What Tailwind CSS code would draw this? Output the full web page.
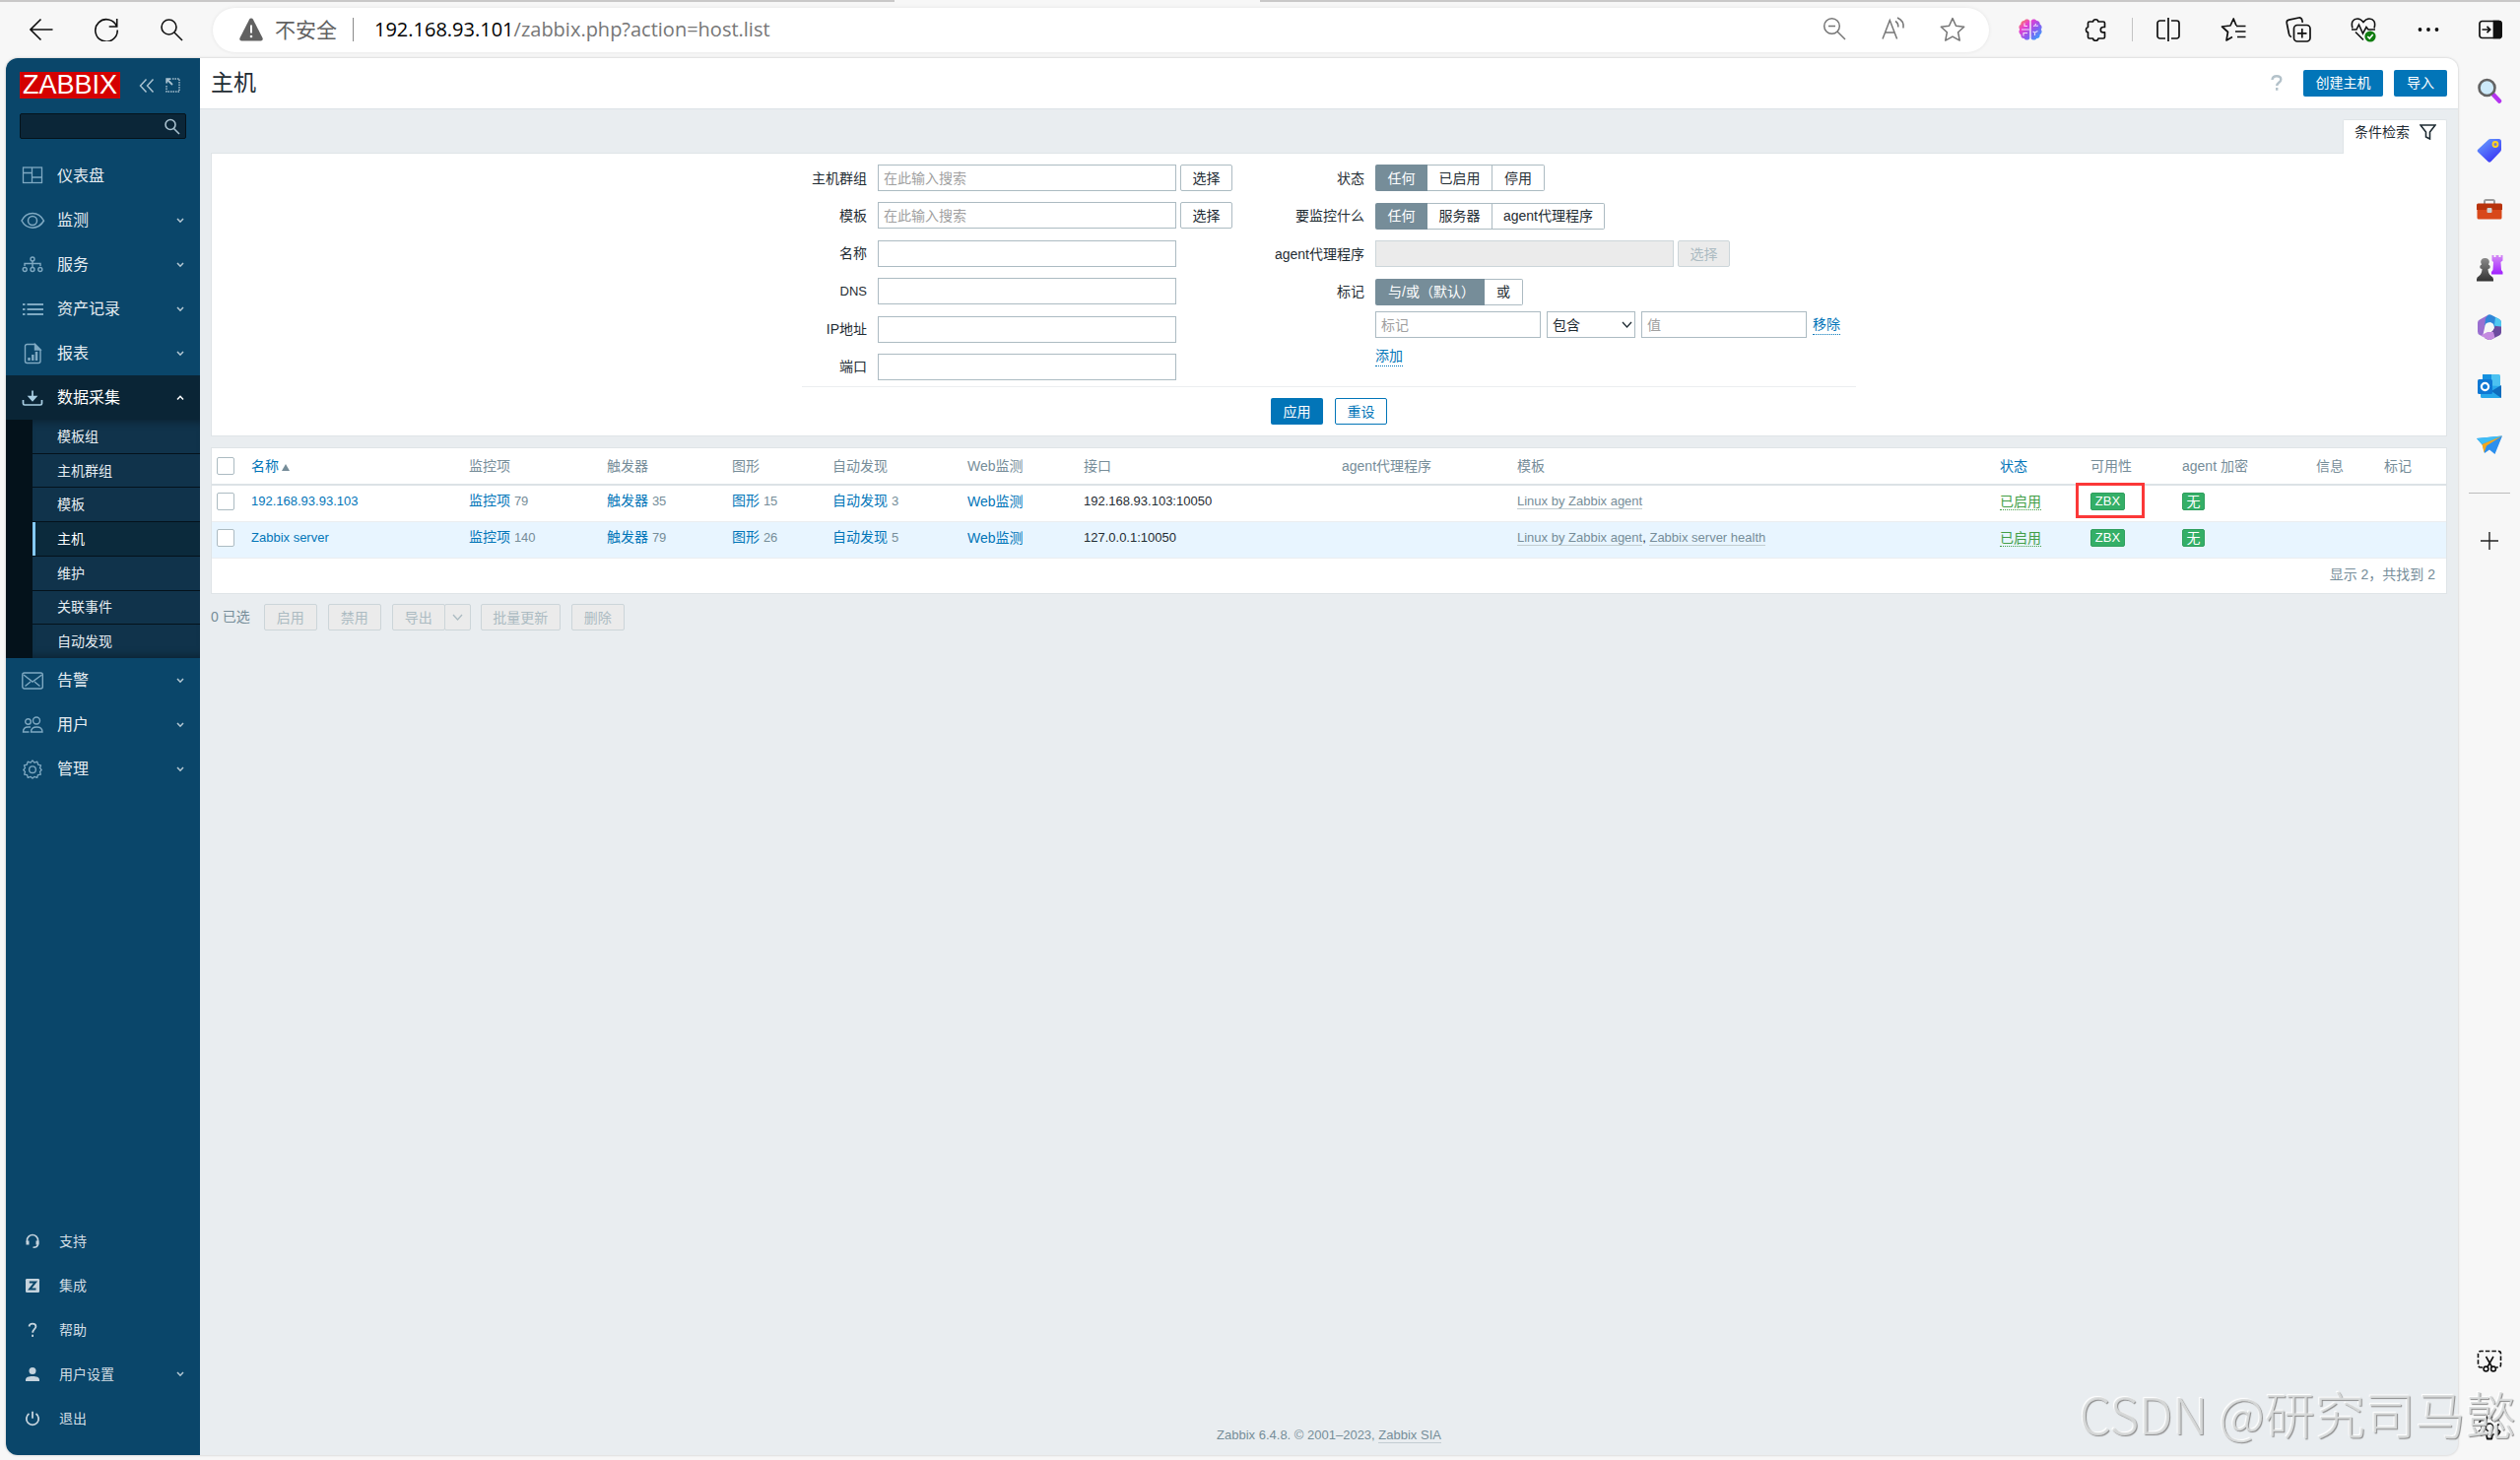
<!DOCTYPE html>
<html lang="zh-CN">
<head>
<meta charset="utf-8">
<title>主机</title>
<script src="https://cdn.jsdelivr.net/npm/@tailwindcss/browser@4"></script>
</head>
<body class="flex min-h-screen flex-col overflow-x-hidden bg-[#f7f7f7] font-['Liberation_Sans','Noto_Sans_CJK_SC',sans-serif] text-sm leading-5 text-[#1f2c33]">
<svg class="hidden">
  <symbol id="down" viewBox="0 0 8 6"><path d="M1 1l3 3.200 3-3.200" fill="none" stroke="currentColor" stroke-width="1.500"/></symbol>
  <symbol id="up" viewBox="0 0 8 6"><path d="M1 4.500l3-3.200 3 3.200" fill="none" stroke="currentColor" stroke-width="1.500"/></symbol>
</svg>

<!-- browser toolbar -->
<div class="flex h-[2px] bg-[#c9c8c8]"><div class="ml-[35.5%] w-[14.5%] bg-[#f7f7f7]"></div></div>
<header class="flex h-[57px] items-center pb-px font-['Open_Sans','Noto_Sans_CJK_SC',sans-serif]">
  <div class="ml-[9px] flex">
    <button aria-label="后退" class="flex w-[66px] justify-center"><svg class="size-6" viewBox="0 0 24 24" fill="none" stroke="#111" stroke-width="1.600"><path d="M23.500 12H1.500M11.500 1.500L1 12l10.500 10.500"/></svg></button>
    <button aria-label="刷新" class="flex w-[66px] justify-center"><svg class="size-6" viewBox="0 0 24 24" fill="none" stroke="#111" stroke-width="1.600"><path d="M22.500 9A11.200 11.200 0 1 0 23.200 12.500M22.700 1v8h-8"/></svg></button>
    <button aria-label="搜索" class="flex w-[66px] justify-center"><svg class="size-6" viewBox="0 0 24 24" fill="none" stroke="#111" stroke-width="1.600"><circle cx="9.500" cy="9.500" r="7.500"/><path d="M15 15l8 8"/></svg></button>
  </div>
  <div class="mx-[9px] flex h-[45px] flex-1 items-center rounded-full bg-white pr-[7px] pl-[27px] shadow-[0_0_4px_rgba(0,0,0,0.08)]">
    <svg class="size-6" viewBox="0 0 24 24"><path d="M12 .5c.8 0 1.400.4 1.800 1.100l9.700 18.800c.7 1.400-.2 3-1.800 3H2.300c-1.600 0-2.500-1.600-1.800-3L10.200 1.600C10.600.9 11.200.5 12 .5z" fill="#616161"/><path d="M12 7.500v8" stroke="#fff" stroke-width="2"/><circle cx="12" cy="19" r="1.300" fill="#fff"/></svg>
    <span class="ml-3 text-[21px] leading-6 text-[#616161]">不安全</span>
    <span class="ml-4 h-6 w-px bg-[#8a8a8a]"></span>
    <span class="ml-[21px] text-[20px] leading-6 text-[#767676]"><span class="text-black">192.168.93.101</span>/zabbix.php?action=host.list</span>
    <div class="ml-auto flex">
      <button aria-label="缩小" class="flex w-[60px] justify-center"><svg class="size-6" viewBox="0 0 24 24" fill="none" stroke="#767676" stroke-width="1.500"><circle cx="9.500" cy="9.500" r="7.800"/><path d="M15 15l8 8M6 9.500h7"/></svg></button>
      <button aria-label="朗读" class="flex w-[60px] justify-center"><svg class="size-6" viewBox="0 0 24 24" fill="none" stroke="#767676" stroke-width="1.500"><path d="M1 22.500L8.300 3.500 15.600 22.500M3.600 16h9.400M14 4.500c2 1.300 3 3.500 2.800 6M16 1c4.500 2 6.700 6 6 10.500"/></svg></button>
      <button aria-label="收藏" class="flex w-[60px] justify-center"><svg class="size-[26px]" viewBox="0 0 24 24" fill="none" stroke="#767676" stroke-width="1.400" stroke-linejoin="round"><path d="M12 1.500l3.200 7 7.600.9-5.600 5.200 1.500 7.600L12 18.500l-6.700 3.700 1.500-7.600L1.200 9.400l7.600-.9z"/></svg></button>
    </div>
  </div>
  <button aria-label="大脑" class="flex w-[66px] justify-center"><svg class="size-6" viewBox="0 0 24 24"><defs><linearGradient id="br" x1="0" y1="0" x2="1" y2="1"><stop offset="0" stop-color="#ff9a3c"/><stop offset=".3" stop-color="#e83fd0"/><stop offset=".6" stop-color="#8a5cf0"/><stop offset="1" stop-color="#1fb6ff"/></linearGradient></defs><path d="M11.300 3v18c-1 2-4.500 2.300-5.500 0-2.300.2-3.800-1.600-3.300-3.600C.3 16-.2 13.500 1.200 12-.2 10 .3 7.500 2.300 6.700 2.100 4.500 3.700 3 5.600 3.100 6.700.8 10.300.9 11.300 3zM12.700 3v18c1 2 4.500 2.300 5.500 0 2.300.2 3.800-1.600 3.300-3.600 2.200-1.400 2.700-3.900 1.300-5.400 1.400-2 .9-4.500-1.100-5.300.2-2.200-1.400-3.700-3.300-3.600C17.300.8 13.700.9 12.700 3z" fill="url(#br)"/><path d="M3 12h8M6 5.500v3h3M5 18.500v-3h4M15 8.500c2 0 2.500-1 2.500-2.500M20 8l-2.500.5M16.500 18v-3l-2-1M16.500 15l3-1.500" fill="none" stroke="#fff" stroke-width="1.100" opacity=".8"/></svg></button>
  <button aria-label="扩展" class="flex w-[66px] justify-center"><svg class="size-6" viewBox="0 0 24 24" fill="none" stroke="#111" stroke-width="1.700" stroke-linejoin="round"><path d="M9.500 4a2.800 2.800 0 0 1 5.500 0h5a1.500 1.500 0 0 1 1.500 1.500V9.500h-1.500a2.700 2.700 0 0 0 0 5.400h1.500v4.600A1.500 1.500 0 0 1 20 21h-5a2.800 2.800 0 0 1-5.500 0H6a1.500 1.500 0 0 1-1.500-1.500v-4.600a2.800 2.800 0 0 1 0-5.400V5.500A1.500 1.500 0 0 1 6 4z"/></svg></button>
  <div class="flex w-2 justify-center"><span class="h-6 w-px bg-[#c4c4c4]"></span></div>
  <button aria-label="分屏" class="flex w-[66px] justify-center"><svg class="size-6" viewBox="0 0 24 24" fill="none" stroke="#111" stroke-width="1.700"><path d="M9 3H3.500A2.500 2.500 0 0 0 1 5.500v13A2.500 2.500 0 0 0 3.500 21H9M15 3h5.500A2.500 2.500 0 0 1 23 5.500v13a2.500 2.500 0 0 1-2.500 2.500H15M12 0v24"/></svg></button>
  <button aria-label="收藏夹" class="flex w-[66px] justify-center"><svg class="size-[26px]" viewBox="0 0 26 26" fill="none" stroke="#111" stroke-width="1.700" stroke-linejoin="round"><path d="M16 9l-2.800-7L10 9l-8.500 1 6 5.500-1.500 8.500 6-3.500M16 9.500h9.500M15 15h10.500M17 20.500h8.500"/></svg></button>
  <button aria-label="集锦" class="flex w-[66px] justify-center"><svg class="size-[26px]" viewBox="0 0 26 26" fill="none" stroke="#111" stroke-width="1.700"><rect x="8.500" y="8.500" width="16.500" height="16.500" rx="3.500"/><path d="M16.800 12v9.500M12 16.800h9.500M6 20.500c-1.500-.5-2.300-1.500-2.500-3L1.300 6.500C1 4.800 2 3.500 3.500 3.200l10-2.200c1.600-.3 3 .7 3.300 2.300l.5 2.500"/></svg></button>
  <button aria-label="性能" class="flex w-[66px] justify-center"><svg class="size-[26px]" viewBox="0 0 26 26" fill="none" stroke="#111" stroke-width="1.600"><path d="M2 11.500C0 5 3 2 7 2c3 0 4.500 1.500 6 3.500C14.500 3.500 16 2 19 2c4 0 7 3 5 9.500M1 13h5l2.500-5 4 9 3.500-6.500 2 2.500h7M5 15.500l8 8"/><circle cx="20" cy="20" r="5.600" fill="#107c10" stroke="none"/><path d="M17.300 20l2 2 3.400-4" stroke="#fff"/></svg></button>
  <button aria-label="更多" class="flex w-[66px] justify-center"><svg class="size-6" viewBox="0 0 24 24" fill="#111"><circle cx="3.500" cy="12" r="1.900"/><circle cx="12" cy="12" r="1.900"/><circle cx="20.500" cy="12" r="1.900"/></svg></button>
  <button aria-label="侧栏" class="flex w-[60px] justify-center"><svg class="size-6" viewBox="0 0 24 24" fill="none" stroke="#111" stroke-width="1.700"><rect x="1" y="3.500" width="22" height="17" rx="2.500"/><path d="M15.500 3.500H20.500A2.500 2.500 0 0 1 23 6v12a2.500 2.500 0 0 1-2.500 2.500h-5z" fill="#111"/><path d="M3.500 12h8M8.500 8.800l3.200 3.200-3.200 3.200"/></svg></button>
</header>

<div class="flex flex-1 pb-[5px] pl-[6px]">
  <div class="flex flex-1 overflow-hidden rounded-xl bg-[#e9edf0] shadow-[0_0_2px_1px_rgba(0,0,0,0.1)]">
    <!-- sidebar -->
    <nav class="flex w-[197px] shrink-0 flex-col bg-[#0a466a] pt-[14px] pb-[15px] text-[#e6edf2]">
      <div class="flex items-center px-[14px]">
        <a href="#" class="flex h-[27px] w-[102px] items-center justify-center bg-[#d40000] text-[27px] leading-[27px] text-white">ZABBIX</a>
        <button aria-label="收起侧栏" class="ml-[19px]"><svg class="h-[14px] w-4" viewBox="0 0 16 14" fill="none" stroke="#a9c1cf" stroke-width="1.500"><path d="M7.500.5L1.500 7l6 6.500M14.500.5l-6 6.500 6 6.500"/></svg></button>
        <button aria-label="隐藏侧栏" class="ml-[11px]"><svg class="h-[15px] w-[15px]" viewBox="0 0 15 15" fill="none" stroke="#a9c1cf" stroke-width="1.400"><path d="M7 1h7v13H1V7" stroke-dasharray="1.500 1"/><path d="M1.500 1.500L7 7M1.200 5.500V1.200H5.500" stroke-width="1.800"/></svg></button>
      </div>
      <form class="mx-[14px] mt-[15px] flex h-[26px] w-[169px] items-center rounded-[2px] border border-[#04121b] bg-[#0b2638] pr-[5px]">
        <input aria-label="搜索" class="min-w-0 flex-1 bg-transparent px-2 outline-none">
        <button aria-label="搜索"><svg class="size-[17px]" viewBox="0 0 17 17" fill="none" stroke="#a9c1cf" stroke-width="1.600"><circle cx="7" cy="6.500" r="5"/><path d="M10.500 10.500l5.500 5.500"/></svg></button>
      </form>
      <ul class="mt-[15px] text-base">
        <li><a href="#" class="flex h-[45px] items-center pl-4"><svg class="size-[22px]" viewBox="0 0 22 22" fill="none" stroke="#7fa9c2" stroke-width="1.300"><rect x="1.500" y="2" width="19" height="15.500"/><path d="M10.500 2v15.500M1.500 7.500h9M10.500 12h10"/></svg><span class="ml-[14px]">仪表盘</span></a></li>
        <li><a href="#" class="flex h-[45px] items-center pl-4"><svg class="size-[22px] overflow-visible" viewBox="0 0 22 22" fill="none" stroke="#7fa9c2" stroke-width="1.500"><path d="M0 11C5 1 17 1 22.500 11 17 20.500 5 20.500 0 11z"/><circle cx="11" cy="11" r="4.500"/></svg><span class="ml-[14px]">监测</span><svg class="mr-4 ml-auto h-[6px] w-2 text-[#b5c8d3]"><use href="#down"/></svg></a></li>
        <li><a href="#" class="flex h-[45px] items-center pl-4"><svg class="size-[22px]" viewBox="0 0 22 22" fill="none" stroke="#7fa9c2" stroke-width="1.400"><circle cx="11" cy="5" r="2"/><circle cx="3.200" cy="15.500" r="2"/><circle cx="11" cy="15.500" r="2"/><circle cx="18.800" cy="15.500" r="2"/><path d="M11 7v6M3 12V9.500h16V12"/></svg><span class="ml-[14px]">服务</span><svg class="mr-4 ml-auto h-[6px] w-2 text-[#b5c8d3]"><use href="#down"/></svg></a></li>
        <li><a href="#" class="flex h-[45px] items-center pl-4"><svg class="size-[22px]" viewBox="0 0 22 22" fill="none" stroke="#7fa9c2" stroke-width="2"><path d="M1 6h2.500M5.500 6H22M1 11h2.500M5.500 11H22M1 16h2.500M5.500 16H22"/></svg><span class="ml-[14px]">资产记录</span><svg class="mr-4 ml-auto h-[6px] w-2 text-[#b5c8d3]"><use href="#down"/></svg></a></li>
        <li><a href="#" class="flex h-[45px] items-center pl-4"><svg class="size-[22px]" viewBox="0 0 22 22" fill="none" stroke="#7fa9c2" stroke-width="1.400"><path d="M13.500 1.500H5.500a2 2 0 0 0-2 2v15a2 2 0 0 0 2 2h11.500a2 2 0 0 0 2-2V7z"/><path d="M13.500 1.500V7H19z" fill="#7fa9c2"/><path d="M7.500 18v-3M11.300 18v-6M15 18V9" stroke-width="2.500"/></svg><span class="ml-[14px]">报表</span><svg class="mr-4 ml-auto h-[6px] w-2 text-[#b5c8d3]"><use href="#down"/></svg></a></li>
        <li>
          <a href="#" class="flex h-[45px] items-center bg-[#0a2536] pl-4 text-white"><svg class="size-[22px]" viewBox="0 0 22 22" fill="none" stroke="#a9cfe4" stroke-width="1.700"><path d="M1.500 13v3.500a1.500 1.500 0 0 0 1.500 1.500h16a1.500 1.500 0 0 0 1.500-1.500V13M11 3.500v9"/><path d="M7.500 9.500h7L11 13.500z" fill="#a9cfe4"/></svg><span class="ml-[14px]">数据采集</span><svg class="mr-4 ml-auto h-[6px] w-2"><use href="#up"/></svg></a>
          <ul class="flex h-[242px] flex-col divide-y divide-[#04121b] border-l-[27px] border-[#04121b] bg-[#10334b] text-sm text-[#e6edf2]">
            <li class="flex flex-1 items-center pl-[25px] shadow-[inset_0_8px_8px_-6px_rgba(0,0,0,0.35)]"><a href="#">模板组</a></li>
            <li class="flex flex-1 items-center pl-[25px]"><a href="#">主机群组</a></li>
            <li class="flex flex-1 items-center pl-[25px]"><a href="#">模板</a></li>
            <li class="flex flex-1 items-center bg-[#0b2a3c] text-white"><span class="h-full w-[3px] bg-[#85c9f7]"></span><a href="#" class="pl-[22px]">主机</a></li>
            <li class="flex flex-1 items-center pl-[25px]"><a href="#">维护</a></li>
            <li class="flex flex-1 items-center pl-[25px]"><a href="#">关联事件</a></li>
            <li class="flex flex-1 items-center pl-[25px] shadow-[inset_0_-8px_8px_-6px_rgba(0,0,0,0.35)]"><a href="#">自动发现</a></li>
          </ul>
        </li>
        <li><a href="#" class="flex h-[45px] items-center pl-4"><svg class="size-[22px]" viewBox="0 0 22 22" fill="none" stroke="#7fa9c2" stroke-width="1.400"><rect x=".8" y="3" width="20.500" height="16" rx="2"/><path d="M2 5l9 7 9.500-7M3.500 16.500l5.500-4.500M18.500 16.500L13 12"/></svg><span class="ml-[14px]">告警</span><svg class="mr-4 ml-auto h-[6px] w-2 text-[#b5c8d3]"><use href="#down"/></svg></a></li>
        <li><a href="#" class="flex h-[45px] items-center pl-4"><svg class="size-[22px]" viewBox="0 0 22 22" fill="none" stroke="#7fa9c2" stroke-width="1.400"><circle cx="6.500" cy="7.500" r="2.800"/><circle cx="15" cy="6.500" r="3.500"/><path d="M9.500 18c0-3.500 2-5 5.800-5s5.700 1.500 5.700 5zM7.500 18H1.500c0-3.500 1.500-5 5-5h2.500"/></svg><span class="ml-[14px]">用户</span><svg class="mr-4 ml-auto h-[6px] w-2 text-[#b5c8d3]"><use href="#down"/></svg></a></li>
        <li><a href="#" class="flex h-[45px] items-center pl-4"><svg class="size-[22px]" viewBox="0 0 22 23" fill="none" stroke="#7fa9c2" stroke-width="1.400" stroke-linejoin="round"><path d="M11 2l2 2.300 3-1 .9 3 3 .8-1 3 1.700 1.900-1.700 2 .8 2.800-3 .6-.8 2.900-3-1L11 21l-1.900-1.700-3 1-.8-2.900-3-.6.800-2.800-1.700-2 1.700-1.900-1-3 3-.8.900-3 3 1z"/><circle cx="11" cy="11.700" r="3.500"/></svg><span class="ml-[14px]">管理</span><svg class="mr-4 ml-auto h-[6px] w-2 text-[#b5c8d3]"><use href="#down"/></svg></a></li>
      </ul>
      <ul class="mt-auto text-[#d3dee5]">
        <li><a href="#" class="flex h-[45px] items-center pl-[19px]"><svg class="size-4" viewBox="0 0 16 16" fill="none" stroke="#c5d3dd" stroke-width="1.600"><path d="M2.500 9V7a5.500 5.500 0 0 1 11 0v3.500c0 2-1.500 3.700-5 3.700"/><path d="M3 7.500v4M13 7.500v4" stroke-width="3"/></svg><span class="ml-[19px]">支持</span></a></li>
        <li><a href="#" class="flex h-[45px] items-center pl-[19px]"><svg class="size-4" viewBox="0 0 16 16"><rect x="1" y="1" width="14" height="14" rx="1.200" fill="#c5d3dd"/><path d="M4.800 4.500h6.200L5.200 11.500h6.300" fill="none" stroke="#0a466a" stroke-width="2"/></svg><span class="ml-[19px]">集成</span></a></li>
        <li><a href="#" class="flex h-[45px] items-center pl-[19px]"><svg class="size-4" viewBox="0 0 16 16" fill="none" stroke="#c5d3dd" stroke-width="1.800"><path d="M4.500 4.500C4.800 2.500 6 1.700 8 1.700s3.400 1 3.400 2.800c0 2.500-3.200 3-3.200 6.200"/><path d="M8.100 12.800V15"/></svg><span class="ml-[19px]">帮助</span></a></li>
        <li><a href="#" class="flex h-[45px] items-center pl-[19px]"><svg class="size-4" viewBox="0 0 16 16" fill="#c5d3dd"><circle cx="8" cy="4.500" r="3.500"/><path d="M1 15v-1.500C1 11 4 10 8 10s7 1 7 3.500V15z"/></svg><span class="ml-[19px]">用户设置</span><svg class="mr-4 ml-auto h-[6px] w-2 text-[#b5c8d3]"><use href="#down"/></svg></a></li>
        <li><a href="#" class="flex h-[45px] items-center pl-[19px]"><svg class="size-4" viewBox="0 0 16 16" fill="none" stroke="#c5d3dd" stroke-width="1.800"><path d="M4.500 3a6.200 6.200 0 1 0 7 0M8 .8v7"/></svg><span class="ml-[19px]">退出</span></a></li>
      </ul>
    </nav>

    <!-- page -->
    <main class="flex min-w-0 flex-1 flex-col">
      <div class="flex h-[52px] items-center border-b border-[#dce2e6] bg-white px-[11px] pb-px">
        <h1 class="text-[23px] leading-8">主机</h1>
        <button aria-label="帮助" class="mr-5 ml-auto"><svg class="h-4 w-[14px]" viewBox="0 0 14 16" fill="none" stroke="#b4c2ca" stroke-width="2.400"><path d="M2.500 5C2.700 2.500 4.500 1.300 7 1.300s4.300 1.200 4.300 3.400c0 3-4.100 3-4.100 6.300"/><path d="M7.200 13v2.800"/></svg></button>
        <button class="h-[27px] w-[81px] rounded-[2px] bg-[#0275b8] text-white">创建主机</button>
        <button class="ml-[11px] h-[27px] w-[54px] rounded-[2px] bg-[#0275b8] text-white">导入</button>
      </div>

      <div class="px-[11px] pt-[10px]">
        <div class="flex justify-end">
          <a href="#" class="relative z-10 -mb-px flex h-[35px] w-[106px] items-start gap-[10px] rounded-t-[2px] border border-b-0 border-[#dfe4e7] bg-white pt-[2px] pl-[11px]">条件检索<svg class="mt-[2px] h-4 w-[17px]" viewBox="0 0 17 16" fill="none" stroke="#1f2c33" stroke-width="1.600"><path d="M1 1h15l-5.500 7v7l-4-2V8z"/></svg></a>
        </div>
        <form class="border border-[#dfe4e7] bg-white pt-[11px] pb-[11px]">
          <div class="mx-auto w-[1070px]">
            <div class="flex border-b border-[#ebeef0] pb-[6px]">
              <div class="flex h-[219px] w-[505px] flex-col justify-between">
                <div class="flex h-[27px] items-center"><label for="f1" class="mr-[11px] w-[66px] text-right">主机群组</label><input id="f1" placeholder="在此输入搜索" class="h-[27px] w-[303px] border border-[#acbbc2] px-[5px] placeholder:text-[#a0a0a0]"><button type="button" class="ml-1 h-[27px] w-[53px] rounded-[2px] border border-[#acbbc2]">选择</button></div>
                <div class="flex h-[27px] items-center"><label for="f2" class="mr-[11px] w-[66px] text-right">模板</label><input id="f2" placeholder="在此输入搜索" class="h-[27px] w-[303px] border border-[#acbbc2] px-[5px] placeholder:text-[#a0a0a0]"><button type="button" class="ml-1 h-[27px] w-[53px] rounded-[2px] border border-[#acbbc2]">选择</button></div>
                <div class="flex h-[27px] items-center"><label for="f3" class="mr-[11px] w-[66px] text-right">名称</label><input id="f3" class="h-[27px] w-[303px] border border-[#acbbc2] px-[5px]"></div>
                <div class="flex h-[27px] items-center"><label for="f4" class="mr-[11px] w-[66px] text-right text-[13px]">DNS</label><input id="f4" class="h-[27px] w-[303px] border border-[#acbbc2] px-[5px]"></div>
                <div class="flex h-[27px] items-center"><label for="f5" class="mr-[11px] w-[66px] text-right">IP地址</label><input id="f5" class="h-[27px] w-[303px] border border-[#acbbc2] px-[5px]"></div>
                <div class="flex h-[27px] items-center"><label for="f6" class="mr-[11px] w-[66px] text-right">端口</label><input id="f6" class="h-[27px] w-[303px] border border-[#acbbc2] px-[5px]"></div>
              </div>
              <div class="flex-1">
                <div class="flex h-[143px] flex-col justify-between">
                  <div role="radiogroup" aria-labelledby="l-st" class="flex h-[27px] items-center"><span id="l-st" class="mr-[11px] w-[66px] text-right">状态</span>
                    <label class="flex h-[27px] w-[53px] items-center justify-center rounded-l-[2px] bg-[#768d99] text-white"><input type="radio" name="st" checked class="sr-only">任何</label><label class="flex h-[27px] w-[66px] items-center justify-center border-y border-r border-[#acbbc2]"><input type="radio" name="st" class="sr-only">已启用</label><label class="flex h-[27px] w-[53px] items-center justify-center rounded-r-[2px] border-y border-r border-[#acbbc2]"><input type="radio" name="st" class="sr-only">停用</label></div>
                  <div role="radiogroup" aria-labelledby="l-mo" class="flex h-[27px] items-center"><span id="l-mo" class="mr-[11px] -ml-9 w-[102px] text-right">要监控什么</span>
                    <label class="flex h-[27px] w-[53px] items-center justify-center rounded-l-[2px] bg-[#768d99] text-white"><input type="radio" name="mo" checked class="sr-only">任何</label><label class="flex h-[27px] w-[66px] items-center justify-center border-y border-r border-[#acbbc2]"><input type="radio" name="mo" class="sr-only">服务器</label><label class="flex h-[27px] w-[114px] items-center justify-center rounded-r-[2px] border-y border-r border-[#acbbc2]"><input type="radio" name="mo" class="sr-only">agent代理程序</label></div>
                  <div class="flex h-[27px] items-center"><label for="px" class="mr-[11px] -ml-9 w-[102px] text-right">agent代理程序</label><input id="px" disabled class="h-[27px] w-[303px] border border-[#ccd5d9] bg-[#ebebeb]"><button type="button" disabled class="ml-1 h-[27px] w-[53px] rounded-[2px] border border-[#ccd5d9] bg-[#ebebeb] text-[#acbbc2]">选择</button></div>
                  <div role="radiogroup" aria-labelledby="l-tg" class="flex h-[27px] items-center"><span id="l-tg" class="mr-[11px] w-[66px] text-right">标记</span>
                    <label class="flex h-[27px] w-[111px] items-center rounded-l-[2px] bg-[#768d99] pl-[13px] whitespace-nowrap text-white"><input type="radio" name="tg" checked class="sr-only">与/或（默认）</label><label class="flex h-[27px] w-[39px] items-center justify-center rounded-r-[2px] border-y border-r border-[#acbbc2]"><input type="radio" name="tg" class="sr-only">或</label></div>
                </div>
                <div class="mt-[6px] ml-[77px] flex items-center gap-[6px]">
                  <input aria-label="标记" placeholder="标记" class="h-[27px] w-[168px] border border-[#acbbc2] px-[5px] placeholder:text-[#a0a0a0]">
                  <div class="grid w-[90px] items-center"><select aria-label="运算符" class="col-start-1 row-start-1 h-[27px] appearance-none border border-[#acbbc2] bg-white px-[5px]"><option>包含</option></select><svg class="pointer-events-none col-start-1 row-start-1 mr-[3px] h-[7px] w-[11px] justify-self-end" viewBox="0 0 11 7" fill="none" stroke="#1f2c33" stroke-width="1.300"><path d="M1 1l4.500 5L10 1"/></svg></div>
                  <input aria-label="值" placeholder="值" class="h-[27px] w-[168px] border border-[#acbbc2] px-[5px] placeholder:text-[#a0a0a0]">
                  <a href="#" class="border-b border-dotted border-[#0275b8] text-[#0275b8]">移除</a>
                </div>
                <a href="#" class="mt-2 ml-[77px] inline-block border-b border-dotted border-[#0275b8] text-[#0275b8]">添加</a>
              </div>
            </div>
            <div class="flex justify-center gap-3 pt-[11px]">
              <button type="button" class="h-[27px] w-[53px] rounded-[2px] bg-[#0275b8] text-white">应用</button>
              <button type="button" class="h-[27px] w-[53px] rounded-[2px] border border-[#0275b8] text-[#0275b8]">重设</button>
            </div>
          </div>
        </form>

        <div class="mt-[11px] border border-[#dfe4e7] bg-white">
          <table class="w-full table-fixed text-left">
            <colgroup><col class="w-[35px]"><col class="w-[221px]"><col class="w-[140px]"><col class="w-[127px]"><col class="w-[102px]"><col class="w-[137px]"><col class="w-[118px]"><col class="w-[262px]"><col class="w-[178px]"><col><col class="w-[92px]"><col class="w-[93px]"><col class="w-[136px]"><col class="w-[69px]"><col class="w-[68px]"></colgroup>
            <thead>
              <tr class="h-[37px] border-b-2 border-[#dce2e6] text-[#768d99] *:px-[5px] *:font-normal">
                <th><input type="checkbox" aria-label="全选" class="block size-[18px] appearance-none rounded-[2px] border border-[#acbbc2] bg-white"></th>
                <th><a href="#" class="text-[#0275b8]">名称</a><svg class="ml-[3px] inline h-[7px] w-2" viewBox="0 0 8 7"><path d="M4 0l4 7H0z" fill="#768d99"/></svg></th>
                <th>监控项</th><th>触发器</th><th>图形</th><th>自动发现</th><th>Web监测</th><th>接口</th><th>agent代理程序</th><th>模板</th>
                <th><a href="#" class="text-[#0275b8]">状态</a></th><th>可用性</th><th>agent 加密</th><th>信息</th><th>标记</th>
              </tr>
            </thead>
            <tbody class="text-[#768d99]">
              <tr class="h-[37px] border-b border-[#ebeef0] *:px-[5px] *:pb-1">
                <td><input type="checkbox" aria-label="192.168.93.93.103" class="block size-[18px] appearance-none rounded-[2px] border border-[#acbbc2] bg-white"></td>
                <td class="text-[13px]"><a href="#" class="text-[#0275b8]">192.168.93.93.103</a></td>
                <td><a href="#" class="text-[#0275b8]">监控项</a> <span class="text-[13px]">79</span></td>
                <td><a href="#" class="text-[#0275b8]">触发器</a> <span class="text-[13px]">35</span></td>
                <td><a href="#" class="text-[#0275b8]">图形</a> <span class="text-[13px]">15</span></td>
                <td><a href="#" class="text-[#0275b8]">自动发现</a> <span class="text-[13px]">3</span></td>
                <td><a href="#" class="text-[#0275b8]">Web监测</a></td>
                <td class="text-[13px] text-[#1f2c33]">192.168.93.103:10050</td>
                <td></td>
                <td class="text-[13px]"><a href="#" class="border-b border-[#c3cdd2]">Linux by Zabbix agent</a></td>
                <td><a href="#" class="border-b border-dotted border-[#429e47] text-[#429e47]">已启用</a></td>
                <td class="relative"><span class="flex h-[18px] w-[35px] items-center justify-center rounded-[2px] border border-[#2f9f5e] bg-[#34af67] text-[13px] text-white">ZBX</span><span class="absolute -top-[3px] -left-[10px] h-9 w-[70px] border-3 border-[#fb3838]"></span></td>
                <td><span class="flex h-[18px] w-[23px] items-center justify-center rounded-[2px] border border-[#2f9f5e] bg-[#34af67] text-white">无</span></td>
                <td></td><td></td>
              </tr>
              <tr class="h-[37px] border-b border-[#ebeef0] bg-[#e8f5ff] *:px-[5px] *:pb-1">
                <td><input type="checkbox" aria-label="Zabbix server" class="block size-[18px] appearance-none rounded-[2px] border border-[#acbbc2] bg-white"></td>
                <td class="text-[13px]"><a href="#" class="text-[#0275b8]">Zabbix server</a></td>
                <td><a href="#" class="text-[#0275b8]">监控项</a> <span class="text-[13px]">140</span></td>
                <td><a href="#" class="text-[#0275b8]">触发器</a> <span class="text-[13px]">79</span></td>
                <td><a href="#" class="text-[#0275b8]">图形</a> <span class="text-[13px]">26</span></td>
                <td><a href="#" class="text-[#0275b8]">自动发现</a> <span class="text-[13px]">5</span></td>
                <td><a href="#" class="text-[#0275b8]">Web监测</a></td>
                <td class="text-[13px] text-[#1f2c33]">127.0.0.1:10050</td>
                <td></td>
                <td class="text-[13px]"><a href="#" class="border-b border-[#c3cdd2]">Linux by Zabbix agent</a><span class="text-[#1f2c33]">, </span><a href="#" class="border-b border-[#c3cdd2]">Zabbix server health</a></td>
                <td><a href="#" class="border-b border-dotted border-[#429e47] text-[#429e47]">已启用</a></td>
                <td><span class="flex h-[18px] w-[35px] items-center justify-center rounded-[2px] border border-[#2f9f5e] bg-[#34af67] text-[13px] text-white">ZBX</span></td>
                <td><span class="flex h-[18px] w-[23px] items-center justify-center rounded-[2px] border border-[#2f9f5e] bg-[#34af67] text-white">无</span></td>
                <td></td><td></td>
              </tr>
            </tbody>
            <tfoot><tr class="h-[36px] text-right text-[#768d99]"><td colspan="15" class="pr-[11px] pb-[2px]">显示 2，共找到 2</td></tr></tfoot>
          </table>
        </div>

        <div class="mt-[10px] flex items-center text-[#acbbc2] *:h-[27px] *:rounded-[2px]">
          <span class="mr-[14px] leading-[27px] text-[#768d99]">0 已选</span>
          <button disabled class="mr-[11px] w-[54px] border border-[#ccd5d9] bg-[#ebebeb]">启用</button>
          <button disabled class="mr-[11px] w-[54px] border border-[#ccd5d9] bg-[#ebebeb]">禁用</button>
          <button disabled class="w-[54px] border border-[#ccd5d9] bg-[#ebebeb]">导出</button>
          <button disabled aria-label="更多导出" class="mr-[10px] -ml-px flex w-[27px] items-center justify-center border border-[#ccd5d9] bg-[#ebebeb]"><svg class="h-[7px] w-[11px]" viewBox="0 0 11 7" fill="none" stroke="currentColor" stroke-width="1.300"><path d="M1 1l4.500 5L10 1"/></svg></button>
          <button disabled class="mr-[11px] w-[81px] border border-[#ccd5d9] bg-[#ebebeb]">批量更新</button>
          <button disabled class="w-[54px] border border-[#ccd5d9] bg-[#ebebeb]">删除</button>
        </div>
      </div>
      <footer class="mt-auto pb-[10px] text-center text-[13px] text-[#768d99]">Zabbix 6.4.8. © 2001–2023, <a href="#" class="border-b border-[#c3cdd2]">Zabbix SIA</a></footer>
    </main>
  </div>

  <!-- browser side panel -->
  <aside class="flex w-[63px] shrink-0 flex-col items-center pt-[3px]">
    <button aria-label="搜索" class="flex h-[60px] items-center"><svg class="size-[26px]" viewBox="0 0 26 26"><path d="M16.500 16.500l6.500 7" stroke="#b434f0" stroke-width="4.500" stroke-linecap="round"/><circle cx="10.500" cy="10" r="8" fill="#cdeafa" stroke="#636363" stroke-width="2.600"/></svg></button>
    <button aria-label="购物" class="flex h-[60px] items-center"><svg class="size-[26px]" viewBox="0 0 26 26"><defs><linearGradient id="tg" x1="0" y1="0" x2=".7" y2="1"><stop offset="0" stop-color="#6aa6ff"/><stop offset="1" stop-color="#3a35f5"/></linearGradient></defs><path d="M14 2h8.500A2.500 2.500 0 0 1 25 4.500V13a3 3 0 0 1-1 2L14.500 25a2.200 2.200 0 0 1-3 0L1.500 15.500a2 2 0 0 1 0-3L12 2.700A3 3 0 0 1 14 2z" fill="url(#tg)"/><circle cx="19" cy="7.500" r="2.500" fill="#7a7ad0" stroke="#ffd21f" stroke-width="1.800"/></svg></button>
    <button aria-label="工具" class="flex h-[60px] items-center"><svg class="h-[26px] w-[28px]" viewBox="0 0 28 26"><path d="M9 9V5.500A1.500 1.500 0 0 1 10.500 4h7A1.500 1.500 0 0 1 19 5.500V9" fill="none" stroke="#9b9b9b" stroke-width="2"/><rect x="1.500" y="12" width="25" height="11.500" rx="1.500" fill="#d8481a"/><path d="M2.500 7.500h23A1.500 1.500 0 0 1 27 9v5H1V9a1.500 1.500 0 0 1 1.500-1.500z" fill="#b8330c"/><rect x="11.500" y="12" width="5" height="5" rx="1" fill="#cfcfcf"/></svg></button>
    <button aria-label="游戏" class="flex h-[60px] items-center"><svg class="size-[28px]" viewBox="0 0 28 28"><defs><linearGradient id="pw" x1="0" y1="0" x2="0" y2="1"><stop offset="0" stop-color="#8a8a8a"/><stop offset="1" stop-color="#333"/></linearGradient><linearGradient id="rk" x1="0" y1="0" x2="0" y2="1"><stop offset="0" stop-color="#d58bf5"/><stop offset="1" stop-color="#a020ff"/></linearGradient></defs><path d="M16.500 1h2v2h2V1h3v2h2V1h2v5.500l-2 1.500.5 8 1.500 2V20.500H16V18l1.500-2 .5-8-1.500-1.500z" fill="url(#rk)"/><path d="M9.500 4a4 4 0 0 1 3.500 6.500q1.800.5 1.800 2.500t-2.300 2q0 4.500 3 7 2.500 1 2.500 3.500v2H1v-2q0-2.500 2.500-3.500 3-2.500 3-7-2.300 0-2.300-2t1.800-2.500A4 4 0 0 1 9.500 4z" fill="url(#pw)"/></svg></button>
    <button aria-label="Microsoft 365" class="flex h-[60px] items-center"><svg class="size-[26px]" viewBox="0 0 26 26"><path d="M12 .5L3 5.500q-2 1-2 3v9Q1 20 3 21l3 1.500L8 14l4-6z" fill="#9a6fd0"/><path d="M12 .5q1.500-.6 3 .2l8 4.300q2 1 2 3.500V15l-7-1-4-6-6 5 1-9z" fill="#2f86d8"/><path d="M19 3l4 2q2 1 2 3.500V15l-7-4z" fill="#4fc8f0"/><path d="M25 12.500v6q0 2-2 3l-8 4q-2 1-4 0L8 24l7-6 4-6z" fill="#6b4a9e"/><path d="M4 21.500l7-3.500h6l1.500 5.500-3.500 2q-2 1-4 0z" fill="#c48be0"/><circle cx="13" cy="13" r="4.800" fill="#f7f7f7"/></svg></button>
    <button aria-label="Outlook" class="flex h-[60px] items-center"><svg class="size-[26px]" viewBox="0 0 26 26"><rect x="6" y="1" width="18" height="18" rx="1.500" fill="#4cc2f1"/><path d="M6 1h9v9H6z" fill="#1490df"/><path d="M4 12l21 1v10.500a1.500 1.500 0 0 1-1.500 1.500H5.500A1.500 1.500 0 0 1 4 23.500z" fill="#28a8ea"/><path d="M25 12v13L15 18z" fill="#0f6cbd"/><rect x="1" y="6" width="15" height="15" rx="1.500" fill="#0f78d4"/><circle cx="8.500" cy="13.500" r="3.600" fill="none" stroke="#fff" stroke-width="2.200"/></svg></button>
    <button aria-label="Drop" class="flex h-[60px] items-center"><svg class="size-[26px]" viewBox="0 0 26 26"><path d="M0 6L26 3.500 18.500 22l-5.500-4.500L8 21 6 13z" fill="#2b8fee"/><path d="M0 6L26 3.500 5.500 12z" fill="#3fbdf5"/><path d="M26 3.500L5.500 12 7.500 20.500l2.500-7z" fill="#f5a81c"/></svg></button>
    <div class="mt-[18px] h-px w-[42px] bg-[#bcbcbc]"></div>
    <button aria-label="自定义" class="mt-[39px]"><svg class="size-[18px]" viewBox="0 0 18 18" stroke="#222" stroke-width="1.400"><path d="M9 0v18M0 9h18"/></svg></button>
    <button aria-label="截图" class="mt-auto"><svg class="size-[26px]" viewBox="0 0 26 26" fill="none" stroke="#111" stroke-width="1.600"><path d="M6 20H4a2.500 2.500 0 0 1-2.500-2.500V6A2.500 2.500 0 0 1 4 3.500h18A2.500 2.500 0 0 1 24.500 6v11.500A2.500 2.500 0 0 1 22 20h-2" stroke-dasharray="4.500 2"/><circle cx="9.500" cy="21.500" r="2.400"/><circle cx="17" cy="21.500" r="2.400"/><path d="M9.500 9l6 10.500M17 9l-6 10.500"/></svg></button>
    <button aria-label="设置" class="mt-[42px] mb-[15px]"><svg class="size-[26px]" viewBox="0 0 26 26" fill="none" stroke="#111" stroke-width="1.800" stroke-linejoin="round"><path d="M10.800 1.500h4.400l.7 3.700 2 1.100 3.600-1.300 2.200 3.800-2.900 2.500v3.400l2.900 2.500-2.200 3.800-3.600-1.300-2 1.100-.7 3.700h-4.400l-.7-3.700-2-1.100L4.500 21l-2.200-3.800 2.900-2.500v-3.400L2.300 8.800 4.500 5l3.600 1.300 2-1.100z"/><circle cx="13" cy="13" r="3.800"/></svg></button>
  </aside>
</div>

<div class="pointer-events-none absolute right-1 bottom-4 font-['Noto_Sans_CJK_SC',sans-serif] text-[51px] leading-[64px] font-light whitespace-nowrap text-[#dcdede]/90 [text-shadow:1px_1px_1px_#8c8c8c,-1px_-1px_1px_#ffffff]">CSDN @研究司马懿</div>
</body>
</html>
